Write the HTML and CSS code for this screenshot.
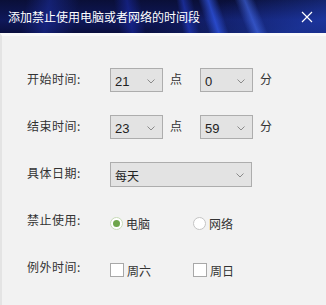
FILE: index.html
```html
<!DOCTYPE html>
<html lang="zh-CN">
<head>
    <meta charset="UTF-8" />
    <title>添加禁止使用电脑或者网络的时间段</title>
    <link rel="stylesheet" href="styles.css">
</head>
<body>
<div class="dialog">
    <div class="titlebar">
        <span class="title">添加禁止使用电脑或者网络的时间段</span>
        <svg class="close" width="12" height="12" viewBox="0 0 12 12">
            <path d="M1 1 L11 11 M11 1 L1 11" stroke="#fff" stroke-width="1.2" fill="none" />
        </svg>
    </div>

    <div class="content">
        <div class="row">
            <span class="label">开始时间:</span>
            <div class="combo small"><span>21</span><svg class="chev" width="8" height="5" viewBox="0 0 8 5"><path d="M0.5 0.5 L4 4 L7.5 0.5" stroke="#8a8a8a" fill="none" /></svg></div>
            <span class="unit">点</span>
            <div class="combo small"><span>0</span><svg class="chev" width="8" height="5" viewBox="0 0 8 5"><path d="M0.5 0.5 L4 4 L7.5 0.5" stroke="#8a8a8a" fill="none" /></svg></div>
            <span class="unit">分</span>
        </div>

        <div class="row">
            <span class="label">结束时间:</span>
            <div class="combo small"><span>23</span><svg class="chev" width="8" height="5" viewBox="0 0 8 5"><path d="M0.5 0.5 L4 4 L7.5 0.5" stroke="#8a8a8a" fill="none" /></svg></div>
            <span class="unit">点</span>
            <div class="combo small"><span>59</span><svg class="chev" width="8" height="5" viewBox="0 0 8 5"><path d="M0.5 0.5 L4 4 L7.5 0.5" stroke="#8a8a8a" fill="none" /></svg></div>
            <span class="unit">分</span>
        </div>

        <div class="row">
            <span class="label">具体日期:</span>
            <div class="combo wide"><span>每天</span><svg class="chev" width="8" height="5" viewBox="0 0 8 5"><path d="M0.5 0.5 L4 4 L7.5 0.5" stroke="#8a8a8a" fill="none" /></svg></div>
        </div>

        <div class="row">
            <span class="label">禁止使用:</span>
            <div class="choices">
                <span class="choice"><span class="radio checked"></span>电脑</span>
                <span class="choice"><span class="radio"></span>网络</span>
            </div>
        </div>

        <div class="row">
            <span class="label">例外时间:</span>
            <div class="choices">
                <span class="choice"><span class="check"></span>周六</span>
                <span class="choice"><span class="check"></span>周日</span>
            </div>
        </div>
    </div>
</div>
</body>
</html>
```

FILE: styles.css
```css
* { box-sizing: border-box; }
body {
    margin: 0;
    font-family: "Noto Sans CJK SC", "Liberation Sans", sans-serif;
    font-size: 12px;
    color: #333;
    background: #f2f2f2;
}
.dialog {
    width: 326px;
    height: 305px;
    display: flex;
    flex-direction: column;
    background: #f2f2f2;
}
/* dark blue wallpaper-like strip */
.titlebar {
    height: 33px;
    display: flex;
    align-items: center;
    justify-content: space-between;
    padding: 0 13px 0 8px;
    color: #fff;
    background:
        linear-gradient(72deg, transparent 62%, rgba(50, 90, 240, 0.7) 65%, transparent 68%),
        linear-gradient(78deg, transparent 55%, rgba(40, 70, 230, 0.5) 57%, transparent 60%),
        linear-gradient(80deg, transparent 36%, rgba(30, 50, 200, 0.45) 40%, transparent 44%),
        linear-gradient(68deg, transparent 73%, rgba(70, 110, 240, 0.6) 76%, transparent 79%),
        linear-gradient(160deg, transparent 55%, rgba(40, 80, 220, 0.5) 90%),
        linear-gradient(100deg, transparent 8%, rgba(30, 50, 170, 0.5) 15%, transparent 24%),
        linear-gradient(180deg, #0a0f38 0%, #0f185a 60%, #0a0f3e 100%);
}
.title { font-size: 12px; }
.close { display: block; }

.content {
    flex: 1;
    background: #f2f2f2;
    border-left: 2px solid #e4e4e4;
    border-top: 3px solid #fafafa;
    padding: 32px 0 0 25px;
    display: flex;
    flex-direction: column;
    gap: 23px;
}
.row {
    display: flex;
    align-items: center;
    height: 24px;
}
.label {
    width: 83px;
    margin-bottom: 3px;
    letter-spacing: 0.5px;
}
.combo {
    height: 24px;
    display: flex;
    align-items: center;
    justify-content: space-between;
    background: #e3e3e3;
    border: 1px solid #adadad;
    padding: 2px 7px 0 4px;
    font-size: 13px;
    color: #222;
}
.combo span { font-family: "Liberation Sans", "Noto Sans CJK SC", sans-serif; }
.combo.small { width: 53px; }
.combo.wide { width: 142px; height: 25px; }
.combo.wide span { font-family: "Noto Sans CJK SC", sans-serif; font-size: 12px; }
.chev { display: block; }
.unit {
    margin: 0 18px 4px 7px;
}

.choices {
    display: flex;
    margin-top: 4px;
}
.choice {
    display: flex;
    align-items: center;
    width: 83px;
}
.radio {
    width: 13px;
    height: 13px;
    border-radius: 50%;
    border: 1px solid #c4c4c4;
    background: #fff;
    margin-right: 3px;
    display: flex;
    align-items: center;
    justify-content: center;
}
.radio.checked { border-color: #c8dcb8; }
.radio.checked::after {
    content: "";
    width: 7px;
    height: 7px;
    border-radius: 50%;
    background: #6ea64a;
}
.check {
    width: 14px;
    height: 14px;
    border: 1px solid #a8a8a8;
    background: #fff;
    margin-right: 3px;
}
```
